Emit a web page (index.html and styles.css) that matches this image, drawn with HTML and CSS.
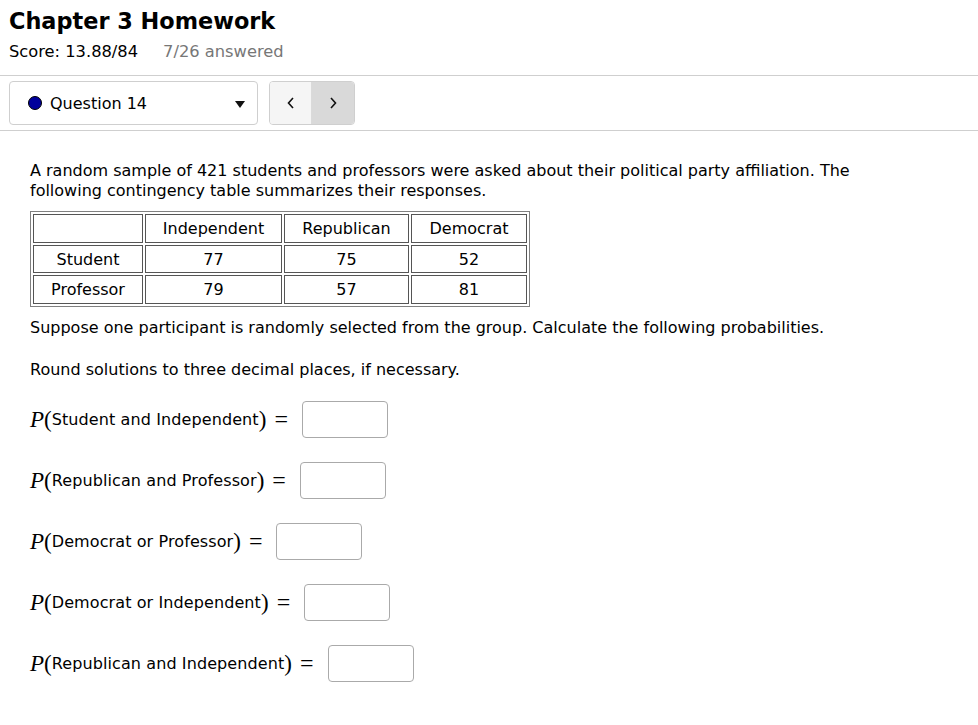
FILE: index.html
```html
<!DOCTYPE html>
<html>
<head>
<meta charset="utf-8">
<link rel="stylesheet" href="styles.css">
</head>
<body>
<div class="head">
  <h1 class="title">Chapter 3 Homework</h1>
  <div class="score"><span>Score: 13.88/84</span><span class="answered">7/26 answered</span></div>
</div>
<div class="toolbar">
  <div class="qselect">
    <span class="dot"></span>
    <span class="qlabel">Question 14</span>
    <span class="caret"></span>
  </div>
  <div class="navbtns">
    <span class="nb prev"><svg width="10" height="14" viewBox="0 0 10 14"><path d="M7 2 L2.5 7 L7 12" fill="none" stroke="#111" stroke-width="1.6"/></svg></span>
    <span class="nb next"><svg width="10" height="14" viewBox="0 0 10 14"><path d="M3 2 L7.5 7 L3 12" fill="none" stroke="#111" stroke-width="1.6"/></svg></span>
  </div>
</div>
<div class="question">
  <p class="intro">A random sample of 421 students and professors were asked about their political party affiliation. The following contingency table summarizes their responses.</p>
  <table class="ct">
    <tr class="r1"><td class="c0"></td><td class="c1">Independent</td><td class="c2">Republican</td><td class="c3">Democrat</td></tr>
    <tr class="r2"><td>Student</td><td>77</td><td>75</td><td>52</td></tr>
    <tr class="r3"><td>Professor</td><td>79</td><td>57</td><td>81</td></tr>
  </table>
  <p class="txt1">Suppose one participant is randomly selected from the group. Calculate the following probabilities.</p>
  <p class="txt2">Round solutions to three decimal places, if necessary.</p>
  <div class="ans first"><span class="mp">P</span><span class="par">(</span><span class="lab">Student and Independent</span><span class="par">)</span><span class="eq">=</span><span class="box"></span></div>
  <div class="ans"><span class="mp">P</span><span class="par">(</span><span class="lab">Republican and Professor</span><span class="par">)</span><span class="eq">=</span><span class="box"></span></div>
  <div class="ans"><span class="mp">P</span><span class="par">(</span><span class="lab">Democrat or Professor</span><span class="par">)</span><span class="eq">=</span><span class="box"></span></div>
  <div class="ans"><span class="mp">P</span><span class="par">(</span><span class="lab">Democrat or Independent</span><span class="par">)</span><span class="eq">=</span><span class="box"></span></div>
  <div class="ans"><span class="mp">P</span><span class="par">(</span><span class="lab">Republican and Independent</span><span class="par">)</span><span class="eq">=</span><span class="box"></span></div>
</div>
</body>
</html>
```
FILE: styles.css
```css
html, body { margin: 0; padding: 0; background: #fff; }
body {
  font-family: "DejaVu Sans", sans-serif;
  color: #000;
  font-size: 16px;
}
.head { padding: 0 9px; border-bottom: 1px solid #cfcfcf; height: 76px; box-sizing: border-box; }
.title { margin: 0; padding-top: 5px; font-size: 22.4px; line-height: 32px; font-weight: bold; }
.score { margin-top: 2px; line-height: 26px; font-size: 16.3px; display: flex; gap: 25px; }
.answered { color: #777; }
.toolbar {
  display: flex; align-items: center; gap: 11px;
  padding: 5px 9px 5px 9px;
  border-bottom: 1px solid #cfcfcf;
  height: 55px; box-sizing: border-box;
}
.qselect {
  width: 249px; height: 44px; box-sizing: border-box;
  border: 1px solid #cfcfcf; border-radius: 4px;
  display: flex; align-items: center; padding: 0 12px 0 18px;
}
.dot { width: 14px; height: 14px; border-radius: 50%; background: #00009c; border: 1px solid #000; box-sizing: border-box; }
.qlabel { margin-left: 8px; flex: 1; }
.caret { width: 0; height: 0; border-left: 5px solid transparent; border-right: 5px solid transparent; border-top: 7px solid #111; margin-top: 2px; }
.navbtns {
  display: flex; height: 44px; box-sizing: border-box;
  border: 1px solid #cfcfcf; border-radius: 4px; overflow: hidden;
}
.nb { width: 42px; display: flex; align-items: center; justify-content: center; box-sizing: border-box; }
.prev { background: #f5f5f5; border-right: 1px solid #dadada; }
.next { background: #d9d9d9; }
.question { padding: 30px 0 0 30px; }
.intro { margin: 0; line-height: 20px; width: 880px; }
.ct { border: 1px solid #808080; border-spacing: 2px; margin-top: 10px; table-layout: fixed; }
.ct td { border: 1px solid #555; text-align: center; padding: 0; }
.r1 td { height: 27px; }
.r2 td { height: 26px; }
.r3 td { height: 27px; }
.c0 { width: 108px; }
.c1 { width: 135px; }
.c2 { width: 123px; }
.c3 { width: 114px; }
.txt1 { margin: 11px 0 0; line-height: 20px; }
.txt2 { margin: 22px 0 0; line-height: 20px; }
.ans { display: flex; align-items: center; height: 37px; margin-top: 24px; }
.ans.first { margin-top: 21px; }
.mp { font-family: "Liberation Serif", serif; font-style: italic; font-size: 23px; }
.par { font-family: "Liberation Serif", serif; font-size: 23px; }
.lab { font-size: 16px; letter-spacing: 0.1px; }
.eq { font-family: "Liberation Serif", serif; font-size: 24px; margin: 0 14px 0 8px; }
.box { width: 86px; height: 37px; box-sizing: border-box; border: 1px solid #aaa; border-radius: 4px; }
```
